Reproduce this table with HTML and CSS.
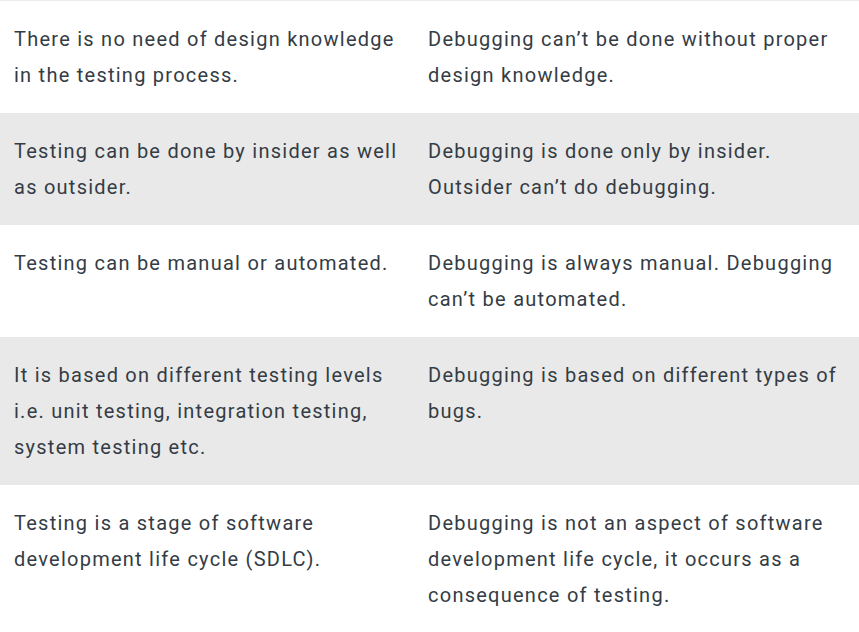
FILE: index.html
```html
<!DOCTYPE html>
<html lang="en">
<head>
<meta charset="utf-8">
<link rel="stylesheet" href="styles.css">
</head>
<body>
<table class="cmp">
  <colgroup><col class="c1"><col class="c2"></colgroup>
  <tbody>
    <tr><td>There is no need of design knowledge in the testing process.</td><td>Debugging can’t be done without proper design knowledge.</td></tr>
    <tr class="alt"><td>Testing can be done by insider as well as outsider.</td><td>Debugging is done only by insider. Outsider can’t do debugging.</td></tr>
    <tr><td>Testing can be manual or automated.</td><td>Debugging is always manual. Debugging can’t be automated.</td></tr>
    <tr class="alt"><td>It is based on different testing levels i.e. unit testing, integration testing, system testing etc.</td><td>Debugging is based on different types of bugs.</td></tr>
    <tr><td>Testing is a stage of software development life cycle (SDLC).</td><td>Debugging is not an aspect of software development life cycle, it occurs as a consequence of testing.</td></tr>
  </tbody>
</table>
</body>
</html>
```
FILE: styles.css
```css
html, body {
  margin: 0;
  padding: 0;
  background: #fff;
}
.cmp {
  width: 859px;
  border-collapse: collapse;
  table-layout: fixed;
  border-top: 1px solid #ececec;
  font-family: Roboto, "Liberation Sans", sans-serif;
  font-size: 20px;
  line-height: 36px;
  letter-spacing: 1.25px;
  color: #343c45;
}
.c1 { width: 414px; }
.c2 { width: 445px; }
.cmp td {
  padding: 20px 14px;
  vertical-align: top;
  text-align: left;
}
.cmp tr.alt td {
  background: #e9e9e9;
}
```
